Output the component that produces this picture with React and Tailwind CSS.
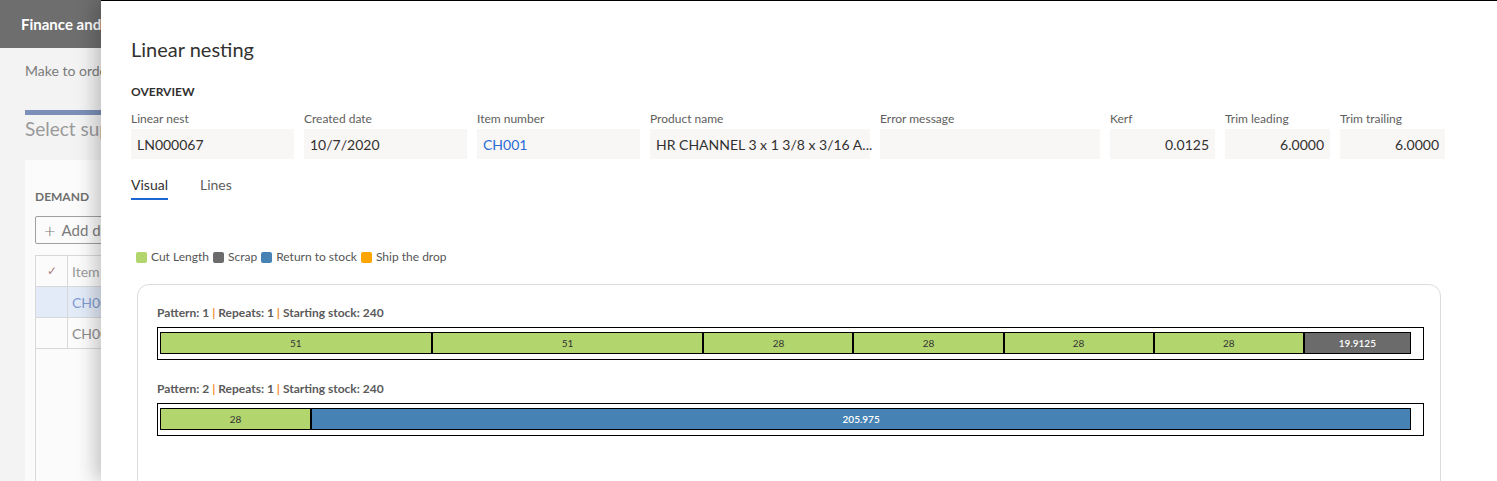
import React from "react";

const font = { fontFamily: '"Segoe UI", Lato, "Liberation Sans", sans-serif' };

const fields = [
  { label: "Linear nest", value: "LN000067", w: "w-[163px]" },
  { label: "Created date", value: "10/7/2020", w: "w-[163px]" },
  { label: "Item number", value: "CH001", w: "w-[163px]", link: true },
  { label: "Product name", value: "HR CHANNEL 3 x 1 3/8 x 3/16 A...", w: "w-[220px]" },
  { label: "Error message", value: "", w: "w-[220px]" },
  { label: "Kerf", value: "0.0125", w: "w-[105px]", right: true },
  { label: "Trim leading", value: "6.0000", w: "w-[105px]", right: true },
  { label: "Trim trailing", value: "6.0000", w: "w-[105px]", right: true },
];

const COLORS = {
  cut: "bg-[#b2d56e] text-[#333]",
  scrap: "bg-[#6b6b6b] text-white font-semibold",
  ret: "bg-[#4682b4] text-white font-semibold",
};

const patterns = [
  {
    n: 1,
    segs: [
      { v: 51, t: "cut" },
      { v: 51, t: "cut" },
      { v: 28, t: "cut" },
      { v: 28, t: "cut" },
      { v: 28, t: "cut" },
      { v: 28, t: "cut" },
      { v: 19.9125, t: "scrap" },
    ],
  },
  {
    n: 2,
    segs: [
      { v: 28, t: "cut" },
      { v: 205.975, t: "ret" },
    ],
  },
];

function Background() {
  return (
    <div className="absolute inset-0 bg-[#f3f3f3]">
      <div className="h-12 bg-[#6e6e6e] flex items-center pl-[21px]">
        <span className="text-white text-[15px] font-bold">Finance and operations</span>
      </div>
      <div className="pl-[25px]">
        <div className="mt-[13px] text-[14px] text-[#7a7a7a] leading-5">Make to order</div>
        <div className="mt-[29px] h-[5px] bg-[#7b8fb8]" />
        <div className="mt-[2px] text-[19px] text-[#9a9a9a] leading-6">Select supply</div>
        <div className="mt-[19px] bg-[#fbfbfb] h-[400px] pl-[10px] pt-[29px]">
          <div className="text-[12px] font-bold text-[#6f6f6f] leading-4">DEMAND</div>
          <div className="mt-[11px] w-[120px] h-[28px] border border-[#a0a0a0] rounded-[2px] flex items-center pl-[8px] text-[15px] text-[#7a7a7a]">
            <span className="text-[20px] leading-none mr-[6px] font-light">+</span>Add demand
          </div>
          <div className="mt-[11px] border border-[#d8d8d8] border-r-0 h-[300px]">
            <div className="flex h-[31px] border-b border-[#d8d8d8] text-[14px] text-[#9a9a9a]">
              <div className="w-[32px] border-r border-[#d8d8d8] flex items-center justify-center text-[12px] text-[#b08080]">✓</div>
              <div className="pl-[4px] flex items-center">Item number</div>
            </div>
            <div className="flex h-[31px] border-b border-[#d8d8d8] bg-[#e3ebf8] text-[14px] text-[#7d9bd0]">
              <div className="w-[32px] border-r border-[#d8d8d8]" />
              <div className="pl-[4px] flex items-center">CH001</div>
            </div>
            <div className="flex h-[31px] border-b border-[#d8d8d8] text-[14px] text-[#8a8a8a]">
              <div className="w-[32px] border-r border-[#d8d8d8]" />
              <div className="pl-[4px] flex items-center">CH001</div>
            </div>
          </div>
        </div>
      </div>
    </div>
  );
}

function Bar({ p }) {
  return (
    <div className="mt-[21px] first:mt-0">
      <div className="text-[12px] leading-4 font-bold text-[#5a5a5a]">
        Pattern: {p.n} <span className="text-[#f28c28]">|</span> Repeats: 1{" "}
        <span className="text-[#f28c28]">|</span> Starting stock: 240
      </div>
      <div className="mt-[6px] border border-black pl-[2px] pr-[12px] pt-[4px] pb-[5px]">
        <div className="flex h-[22px]">
          {p.segs.map((s, i) => (
            <div
              key={i}
              className={`${COLORS[s.t]} border border-black flex items-center justify-center text-[10px] leading-none`}
              style={{ flexGrow: s.v, flexBasis: 0 }}
            >
              {s.v}
            </div>
          ))}
        </div>
      </div>
    </div>
  );
}

function Panel() {
  return (
    <div className="absolute left-[101px] top-0 right-0 bottom-0 bg-white border-t border-black shadow-[-6px_0_18px_rgba(0,0,0,0.22)] pl-[30px] pr-[56px] pt-[34px] text-[#323130]">
      <div className="text-[20px] leading-7">Linear nesting</div>
      <div className="mt-[21px] text-[12px] leading-4 font-bold">OVERVIEW</div>
      <div className="mt-[11px] flex gap-[10px]">
        {fields.map((f) => (
          <div key={f.label} className={`${f.w} shrink-0`}>
            <div className="text-[12px] leading-4 text-[#605e5c]">{f.label}</div>
            <div
              className={`mt-[2px] h-[30px] bg-[#f8f7f6] flex items-center px-[6px] text-[14px] ${
                f.right ? "justify-end" : ""
              } ${f.link ? "text-[#2a6bd4]" : "text-[#323130]"}`}
            >
              <span className="whitespace-nowrap">{f.value}</span>
            </div>
          </div>
        ))}
      </div>
      <div className="mt-[16px] flex gap-[32px] text-[14px] leading-5">
        <div className="pb-[3px] border-b-2 border-[#1a66d2]">Visual</div>
        <div className="text-[#605e5c]">Lines</div>
      </div>
      <div className="mt-[49px] ml-[5px] flex items-center gap-[4px] text-[12px] leading-4 text-[#555]">
        <span className="w-[11px] h-[11px] rounded-[2px] bg-[#b2d56e]" />
        <span>Cut Length</span>
        <span className="w-[11px] h-[11px] rounded-[2px] bg-[#6b6b6b]" />
        <span>Scrap</span>
        <span className="w-[11px] h-[11px] rounded-[2px] bg-[#4682b4]" />
        <span>Return to stock</span>
        <span className="w-[11px] h-[11px] rounded-[2px] bg-[#ffa500]" />
        <span>Ship the drop</span>
      </div>
      <div className="mt-[19px] ml-[6px] border border-[#dcdcdc] rounded-[12px] pl-[19px] pr-[16px] pt-[20px] h-[260px]">
        {patterns.map((p) => (
          <Bar key={p.n} p={p} />
        ))}
      </div>
    </div>
  );
}

export default function App() {
  return (
    <div className="relative w-full h-[481px] overflow-hidden" style={font}>
      <Background />
      <Panel />
    </div>
  );
}
